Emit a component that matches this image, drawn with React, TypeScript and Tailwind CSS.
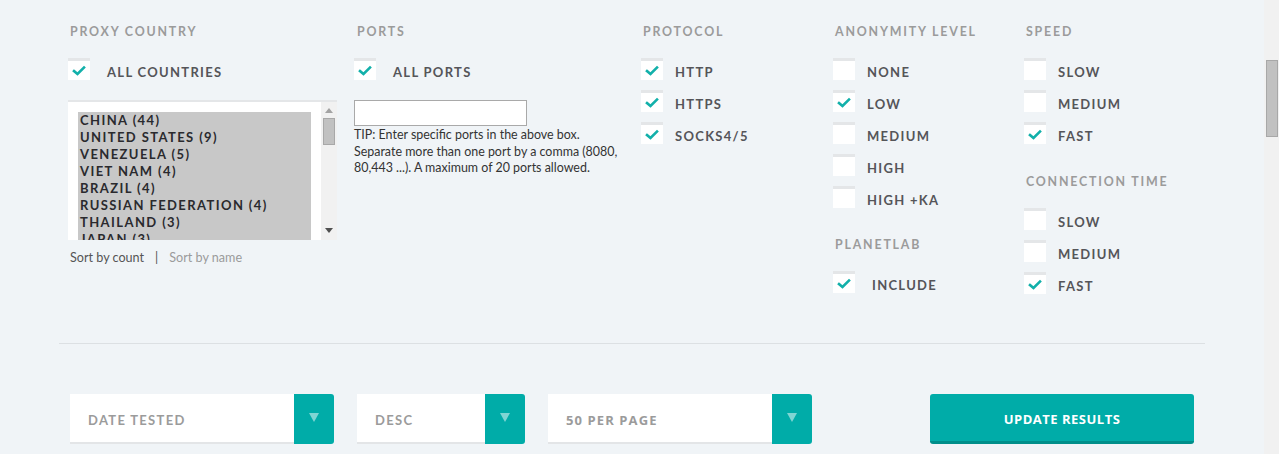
import React from "react";

const font = { fontFamily: "Lato, 'Open Sans', sans-serif" };

function Check() {
  return (
    <svg width="22" height="20" viewBox="0 0 22 20" className="absolute left-0 top-0">
      <polyline points="6,10 9.5,13 16,6.5" fill="none" stroke="#12b0aa" strokeWidth="2.6" strokeLinecap="square" />
    </svg>
  );
}

function Box({ checked }: { checked?: boolean }) {
  return (
    <div className="relative w-[22px] h-[22px] shrink-0 bg-white border-t-[3px] border-[#e4e6e8]">
      {checked && <Check />}
    </div>
  );
}

function Row({ label, checked, gap = "ml-[12px]" }: { label: string; checked?: boolean; gap?: string }) {
  return (
    <div className="flex items-start h-[22px]">
      <Box checked={checked} />
      <span className={`${gap} mt-[6px] leading-[16px] text-[13px] font-bold tracking-[1.3px] text-[#555559] whitespace-nowrap`}>
        {label}
      </span>
    </div>
  );
}

function Heading({ children, className = "" }: { children: React.ReactNode; className?: string }) {
  return (
    <div className={`ml-[2px] h-[14px] leading-[16px] text-[12.4px] font-bold tracking-[1.8px] text-[#9b9b9b] whitespace-nowrap ${className}`}>
      {children}
    </div>
  );
}

function Select({ label, width, narrow }: { label: string; width: string; narrow?: boolean }) {
  return (
    <div className={`flex h-[50px] ${width}`}>
      <div className="flex-1 bg-white border-b-2 border-[#e3e5e7] flex items-center pl-[18px]">
        <span
          className={`mt-[5px] text-[13px] font-bold text-[#9b9b9b] whitespace-nowrap ${narrow ? "tracking-[1.1px]" : "tracking-[1.3px]"}`}
          style={narrow ? { fontFamily: "'Open Sans', sans-serif" } : undefined}
        >
          {label}
        </span>
      </div>
      <div className="w-[40px] bg-[#00aca8] rounded-r-[3px] flex items-center justify-center">
        <svg width="10" height="9" viewBox="0 0 10 9" className="-mt-[3px]">
          <polygon points="0,0 10,0 5,9" fill="#7fd5d3" />
        </svg>
      </div>
    </div>
  );
}

const countries = [
  "CHINA (44)",
  "UNITED STATES (9)",
  "VENEZUELA (5)",
  "VIET NAM (4)",
  "BRAZIL (4)",
  "RUSSIAN FEDERATION (4)",
  "THAILAND (3)",
  "JAPAN (3)",
];

export default function App() {
  return (
    <div className="w-[1279px] h-[454px] flex overflow-hidden bg-[#f0f4f7]" style={font}>
      <div className="w-[1264px] shrink-0 pt-[24px]">
        <div className="h-[319px] flex pl-[68px]">
          {/* Proxy country */}
          <div className="w-[286px] shrink-0 flex flex-col">
            <Heading>PROXY COUNTRY</Heading>
            <div className="mt-[20px]">
              <Row label="ALL COUNTRIES" checked gap="ml-[17px]" />
            </div>
            <div className="mt-[20px] w-[269px] h-[140px] bg-white border-t-2 border-[#e4e6e8] flex">
              <div className="pl-[10px] pt-[10px] w-[243px] shrink-0 overflow-hidden">
                <div className="bg-[#c8c8c8] h-full overflow-hidden pl-[2px]">
                  {countries.map((c) => (
                    <div key={c} className="leading-[17px] text-[13px] font-bold tracking-[1.4px] text-[#2a2a2e] whitespace-nowrap">
                      {c}
                    </div>
                  ))}
                </div>
              </div>
              <div className="ml-[10px] w-[16px] bg-[#f1f1f1] flex flex-col items-center">
                <svg width="8" height="5" viewBox="0 0 8 5" className="mt-[6px]">
                  <polygon points="0,5 8,5 4,0" fill="#a3a3a3" />
                </svg>
                <div className="mt-[5px] w-[12px] h-[27px] bg-[#c1c1c1] border border-[#a8a8a8]" />
                <div className="flex-1" />
                <svg width="8" height="5" viewBox="0 0 8 5" className="mb-[7px]">
                  <polygon points="0,0 8,0 4,5" fill="#505050" />
                </svg>
              </div>
            </div>
            <div className="mt-[10px] leading-[16px] text-[12.6px] ml-[2px] whitespace-nowrap">
              <span className="text-[#555]">Sort by count</span>
              <span className="text-[#555] mx-[11px]">|</span>
              <span className="text-[#9b9b9b]">Sort by name</span>
            </div>
          </div>

          {/* Ports */}
          <div className="w-[287px] shrink-0 flex flex-col">
            <Heading className="ml-[3px]">PORTS</Heading>
            <div className="mt-[20px]">
              <Row label="ALL PORTS" checked gap="ml-[17px]" />
            </div>
            <div className="mt-[20px] w-[173px] h-[26px] bg-white border border-[#a9a9a9]" />
            <div className="mt-[1px] leading-[16.5px] text-[12.45px] text-[#333] whitespace-nowrap">
              TIP: Enter specific ports in the above box.
              <br />
              Separate more than one port by a comma (8080,
              <br />
              80,443 ...). A maximum of 20 ports allowed.
            </div>
          </div>

          {/* Protocol */}
          <div className="w-[192px] shrink-0 flex flex-col">
            <Heading>PROTOCOL</Heading>
            <div className="mt-[20px] flex flex-col gap-[10px]">
              <Row label="HTTP" checked />
              <Row label="HTTPS" checked />
              <Row label="SOCKS4/5" checked />
            </div>
          </div>

          {/* Anonymity */}
          <div className="w-[191px] shrink-0 flex flex-col">
            <Heading>ANONYMITY LEVEL</Heading>
            <div className="mt-[20px] flex flex-col gap-[10px]">
              <Row label="NONE" />
              <Row label="LOW" checked />
              <Row label="MEDIUM" />
              <Row label="HIGH" />
              <Row label="HIGH +KA" />
            </div>
            <Heading className="mt-[29px]">PLANETLAB</Heading>
            <div className="mt-[20px]">
              <Row label="INCLUDE" checked gap="ml-[17px]" />
            </div>
          </div>

          {/* Speed */}
          <div className="flex-1 flex flex-col">
            <Heading className="ml-[1px]">SPEED</Heading>
            <div className="mt-[20px] flex flex-col gap-[10px]">
              <Row label="SLOW" />
              <Row label="MEDIUM" />
              <Row label="FAST" checked />
            </div>
            <Heading className="mt-[30px] ml-[1px]">CONNECTION TIME</Heading>
            <div className="mt-[20px] flex flex-col gap-[10px]">
              <Row label="SLOW" />
              <Row label="MEDIUM" />
              <Row label="FAST" checked />
            </div>
          </div>
        </div>

        <div className="ml-[59px] w-[1146px] h-px bg-[#dce0e3]" />

        <div className="mt-[50px] flex pl-[70px]">
          <Select label="DATE TESTED" width="w-[264px]" />
          <div className="w-[23px]" />
          <Select label="DESC" width="w-[168px]" />
          <div className="w-[23px]" />
          <Select label="50 PER PAGE" width="w-[264px]" narrow />
          <div className="w-[118px]" />
          <div className="w-[264px] h-[50px] bg-[#00aca8] rounded-[3px] border-b-[3px] border-[#008e8a] flex items-center justify-center">
            <span className="text-white text-[13px] font-bold tracking-[0.5px] mt-[5px]" style={{ fontFamily: "'Open Sans', sans-serif" }}>
              UPDATE RESULTS
            </span>
          </div>
        </div>
      </div>
      <div className="w-[15px] shrink-0 bg-[#f1f1f1] pt-[60px] pl-[2px]">
        <div className="w-[12px] h-[77px] bg-[#c1c1c1] border border-[#a8a8a8]" />
      </div>
    </div>
  );
}
